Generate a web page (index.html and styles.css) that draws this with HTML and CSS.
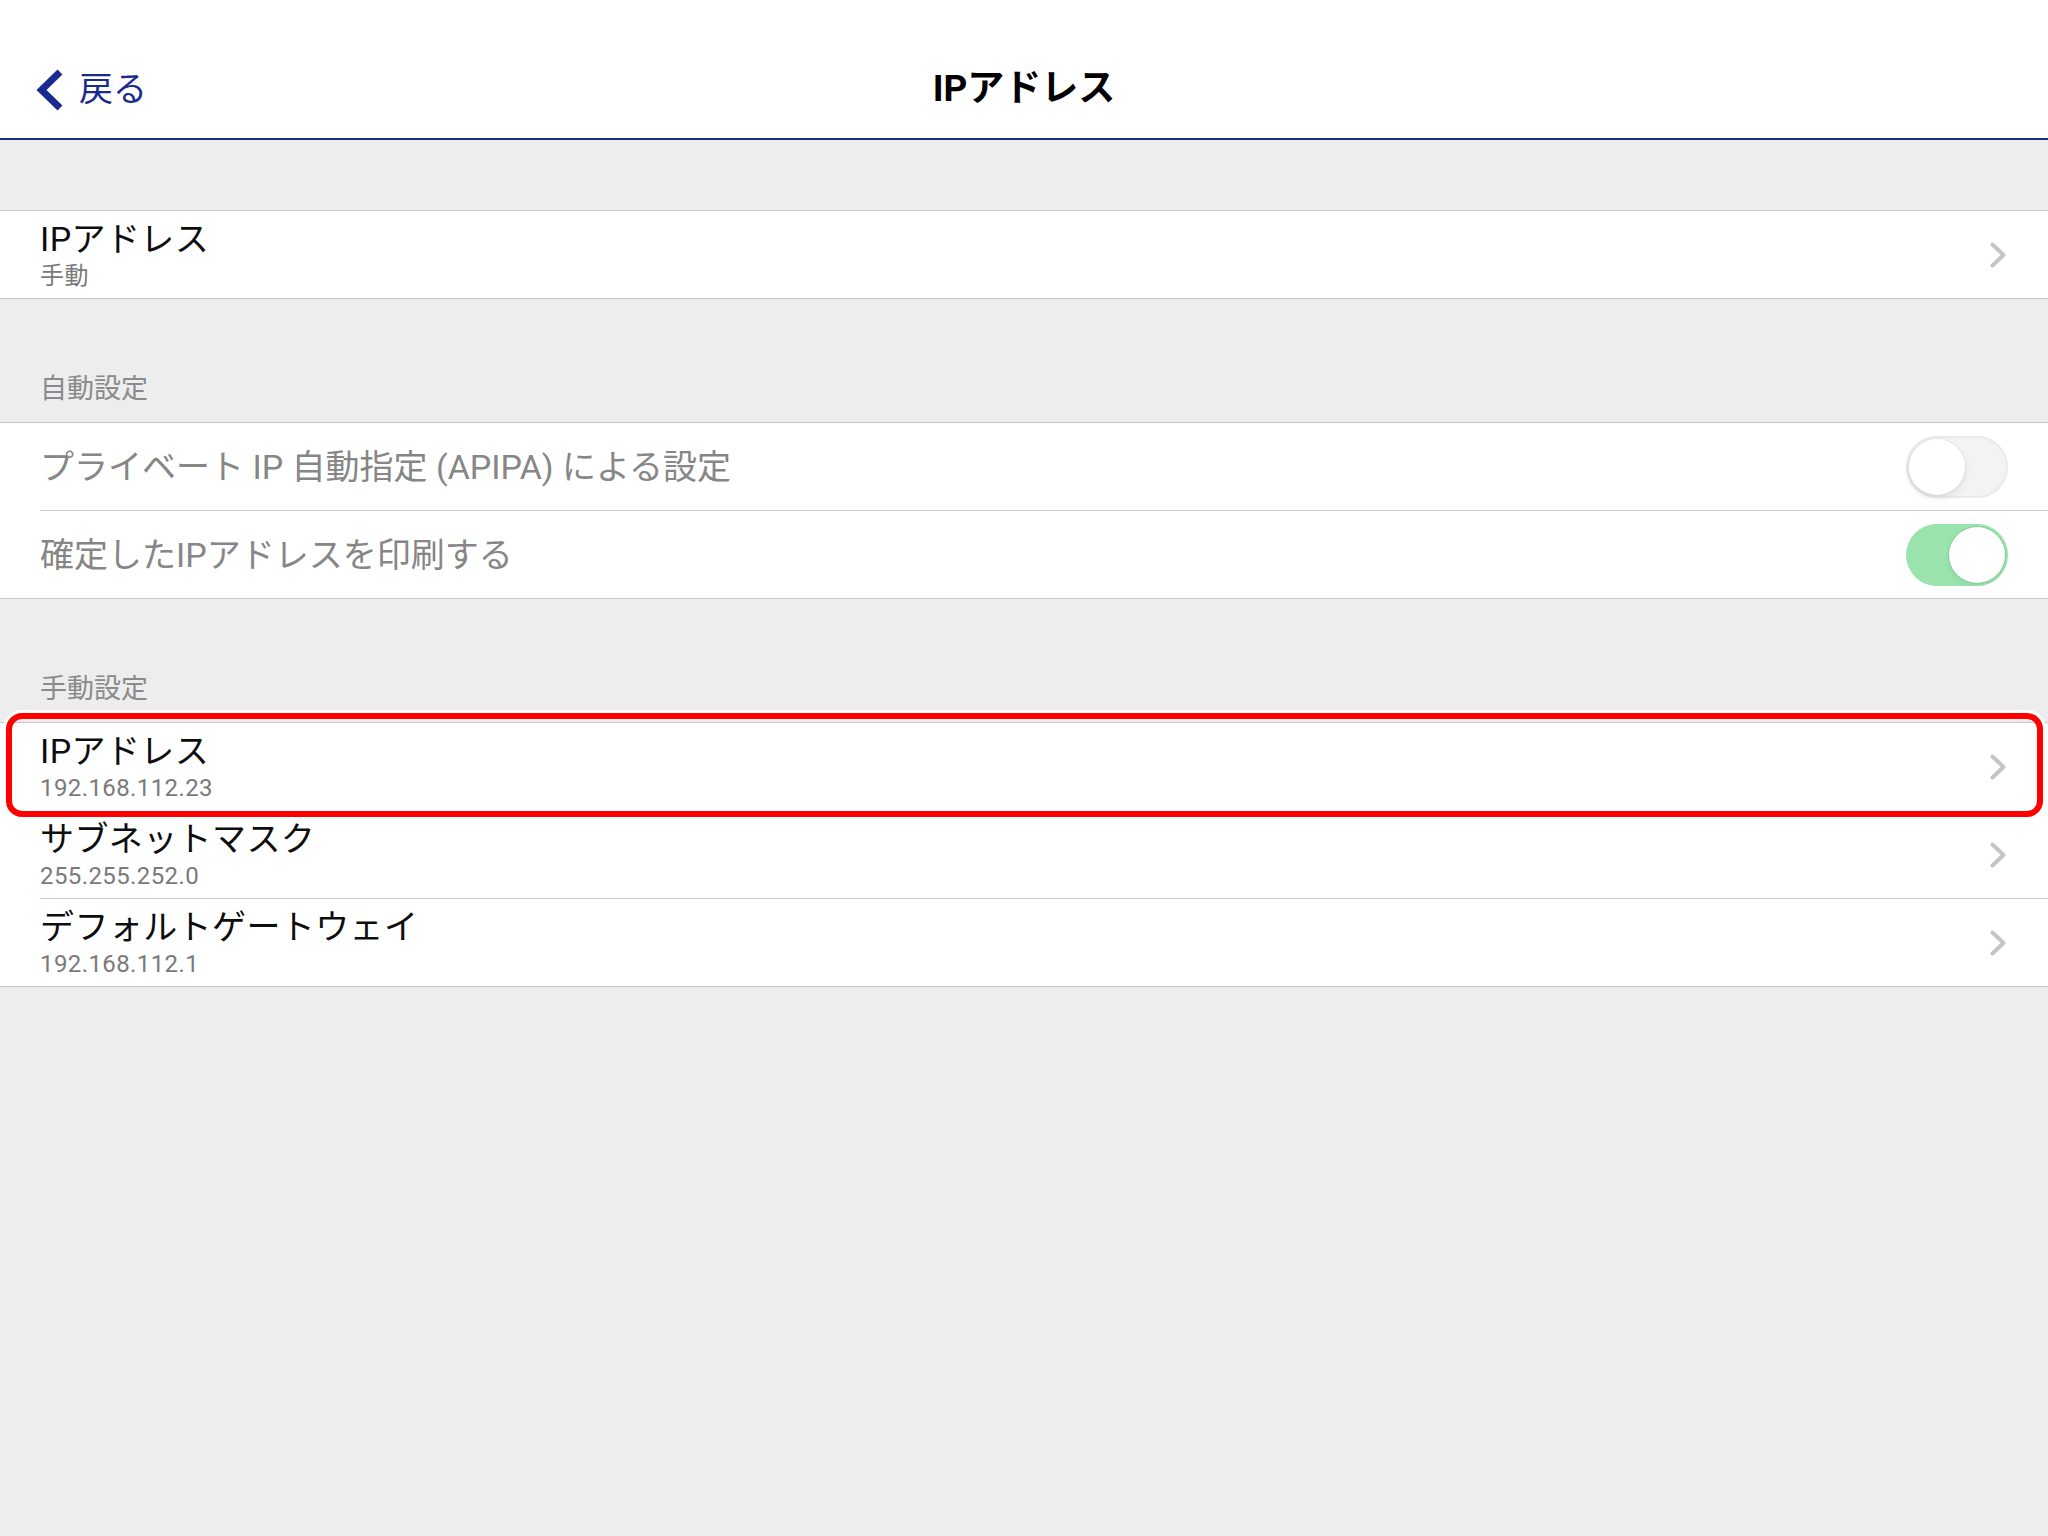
FILE: index.html
```html
<!DOCTYPE html>
<html lang="ja">
<head>
<meta charset="utf-8">
<title>IPアドレス</title>
<link rel="stylesheet" href="styles.css">
</head>
<body>
<header class="nav">
  <div class="nav-back">
    <svg class="back-chevron" width="28" height="42" viewBox="0 0 28 42"><polyline points="25,3 6.5,21 25,39" fill="none" stroke="#1a2a8e" stroke-width="7" stroke-linejoin="miter"/></svg>
    <span class="back-label">戻る</span>
  </div>
  <h1 class="nav-title">IPアドレス</h1>
  <div class="nav-spacer"></div>
</header>

<main class="content">
  <div class="section-header first"></div>
  <div class="group">
    <div class="row">
      <div class="row-inner">
        <div class="cell-text">
          <div class="cell-title">IPアドレス</div>
          <div class="cell-sub">手動</div>
        </div>
        <svg class="disclosure" width="16" height="26" viewBox="0 0 16 26"><polyline points="2.5,2.5 13.5,13 2.5,23.5" fill="none" stroke="#c5c5c8" stroke-width="4" stroke-linecap="round" stroke-linejoin="round"/></svg>
      </div>
    </div>
  </div>

  <div class="section-header"><span>自動設定</span></div>
  <div class="group">
    <div class="row">
      <div class="row-inner">
        <div class="cell-label disabled">プライベート IP 自動指定 (APIPA) による設定</div>
        <span class="switch off"><span class="knob"></span></span>
      </div>
    </div>
    <div class="row">
      <div class="row-inner">
        <div class="cell-label disabled">確定したIPアドレスを印刷する</div>
        <span class="switch on"><span class="knob"></span></span>
      </div>
    </div>
  </div>

  <div class="section-header"><span>手動設定</span></div>
  <div class="group">
    <div class="row highlighted">
      <div class="row-inner">
        <div class="cell-text">
          <div class="cell-title">IPアドレス</div>
          <div class="cell-sub">192.168.112.23</div>
        </div>
        <svg class="disclosure" width="16" height="26" viewBox="0 0 16 26"><polyline points="2.5,2.5 13.5,13 2.5,23.5" fill="none" stroke="#c5c5c8" stroke-width="4" stroke-linecap="round" stroke-linejoin="round"/></svg>
      </div>
      <div class="highlight-box"></div>
    </div>
    <div class="row">
      <div class="row-inner">
        <div class="cell-text">
          <div class="cell-title">サブネットマスク</div>
          <div class="cell-sub">255.255.252.0</div>
        </div>
        <svg class="disclosure" width="16" height="26" viewBox="0 0 16 26"><polyline points="2.5,2.5 13.5,13 2.5,23.5" fill="none" stroke="#c5c5c8" stroke-width="4" stroke-linecap="round" stroke-linejoin="round"/></svg>
      </div>
    </div>
    <div class="row">
      <div class="row-inner">
        <div class="cell-text">
          <div class="cell-title">デフォルトゲートウェイ</div>
          <div class="cell-sub">192.168.112.1</div>
        </div>
        <svg class="disclosure" width="16" height="26" viewBox="0 0 16 26"><polyline points="2.5,2.5 13.5,13 2.5,23.5" fill="none" stroke="#c5c5c8" stroke-width="4" stroke-linecap="round" stroke-linejoin="round"/></svg>
      </div>
    </div>
  </div>
</main>
</body>
</html>
```

FILE: styles.css
```css
* { box-sizing: border-box; }

html, body {
  margin: 0;
  padding: 0;
}

body {
  width: 2048px;
  min-height: 1536px;
  background: #ededed;
  font-family: "Roboto", "Noto Sans CJK JP", sans-serif;
  color: #111;
}

.nav {
  height: 140px;
  padding-top: 40px;
  background: #fff;
  border-bottom: 2px solid #1a2a8e;
  display: flex;
  align-items: center;
}

.nav-back {
  width: 300px;
  display: flex;
  align-items: center;
  padding-left: 35px;
  color: #1a2a8e;
}

.back-chevron {
  display: block;
  margin-right: 16px;
  margin-top: 1px;
}

.back-label {
  font-size: 34px;
  line-height: 40px;
}

.nav-title {
  flex: 1;
  margin: 0;
  text-align: center;
  font-size: 37px;
  font-weight: 700;
  line-height: 44px;
  color: #000;
}

.nav-spacer {
  width: 300px;
}

.section-header {
  height: 123px;
  display: flex;
  align-items: flex-end;
  padding: 0 40px 17px;
  font-size: 27px;
  line-height: 32px;
  color: #8a8a8a;
}

.section-header.first {
  height: 70px;
  padding: 0;
}

.group {
  background: #fff;
  border-top: 1px solid #c8c8c8;
  border-bottom: 1px solid #c8c8c8;
}

.row {
  position: relative;
  padding-left: 40px;
  background: #fff;
}

.row-inner {
  height: 88px;
  display: flex;
  align-items: center;
  padding-right: 40px;
  border-bottom: 1px solid #c8c8c8;
}

.row:last-child .row-inner {
  height: 87px;
  border-bottom: none;
}

.row.highlighted .row-inner {
  border-bottom-color: #fff;
}

.cell-text {
  flex: 1;
  align-self: flex-start;
  padding-top: 8px;
}

.cell-title {
  font-size: 34px;
  line-height: 40px;
  letter-spacing: 0.4px;
  color: #0d0d0d;
}

.cell-sub {
  margin-top: 3px;
  font-size: 24px;
  line-height: 28px;
  letter-spacing: 0.4px;
  color: #7a7a7a;
}

.cell-label {
  flex: 1;
  font-size: 34px;
  line-height: 40px;
  color: #0d0d0d;
}

.cell-label.disabled {
  color: #868686;
}

.disclosure {
  display: block;
  margin-right: 2px;
}

.switch {
  width: 102px;
  height: 62px;
  border-radius: 31px;
  display: flex;
  align-items: center;
  padding: 3px;
}

.switch.off {
  background: #f3f3f3;
  box-shadow: inset 0 0 0 2px #eaeaea;
  justify-content: flex-start;
}

.switch.on {
  background: #9ae3ac;
  justify-content: flex-end;
}

.knob {
  width: 56px;
  height: 56px;
  border-radius: 50%;
  background: #fff;
}

.switch.off .knob {
  box-shadow: 0 3px 7px rgba(0, 0, 0, 0.10), 0 0 0 1px rgba(0, 0, 0, 0.03);
}

.switch.on .knob {
  box-shadow: 0 0 0 1px rgba(120, 200, 140, 0.6), 0 3px 6px rgba(0, 0, 0, 0.06);
}

.highlight-box {
  position: absolute;
  top: -10px;
  left: 6px;
  right: 5px;
  height: 104px;
  border: 6px solid #ff0000;
  border-radius: 16px;
  box-shadow: 0 0 0 3px #fff;
  pointer-events: none;
  z-index: 2;
}
```
